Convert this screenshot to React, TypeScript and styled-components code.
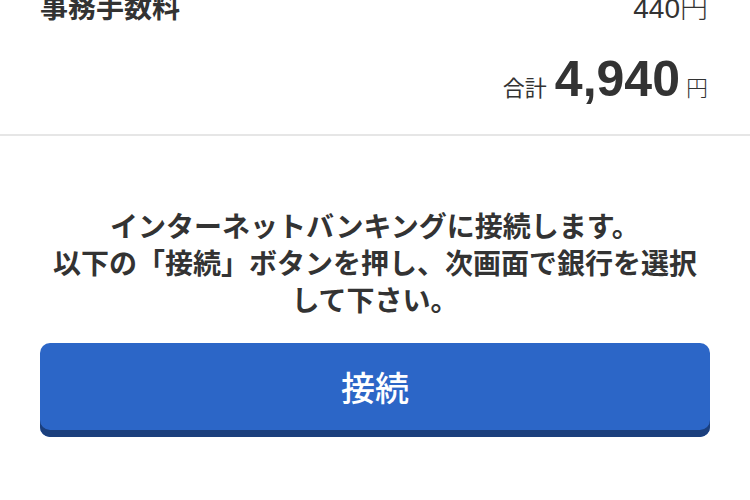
import React from "react";
import styled, { createGlobalStyle } from "styled-components";

const GlobalStyle = createGlobalStyle`
  html, body {
    margin: 0;
    padding: 0;
    background: #fff;
  }
  body {
    font-family: "Liberation Sans", "Noto Sans CJK JP", sans-serif;
    color: #333;
    overflow: hidden;
  }
`;

const Page = styled.div`
  width: 750px;
  height: 500px;
  overflow: hidden;
`;

const Summary = styled.section`
  margin-top: -7px;
  padding: 0 42px 17px 40px;
  border-bottom: 2px solid #e6e6e6;
`;

const FeeRow = styled.div`
  display: flex;
  justify-content: space-between;
  align-items: baseline;
  line-height: 32px;
`;

const FeeLabel = styled.span`
  font-size: 28px;
  font-weight: 700;
`;

const FeeValue = styled.span`
  font-size: 28px;
  font-weight: 400;
`;

const Yen = styled.span<{ $size: number }>`
  font-size: ${(p) => p.$size}px;
  font-weight: 300;
  margin-left: ${(p) => (p.$size > 24 ? 0 : 6)}px;
`;

const TotalRow = styled.div`
  display: flex;
  justify-content: flex-end;
  align-items: baseline;
  margin-top: 26px;
  line-height: 56px;
`;

const TotalLabel = styled.span`
  font-size: 22px;
  font-weight: 400;
  margin-right: 8px;
`;

const TotalAmount = styled.span`
  font-size: 50px;
  font-weight: 700;
`;

const Connect = styled.section`
  padding: 73px 40px 0;
`;

const Notice = styled.p`
  margin: 0 0 23px;
  text-align: center;
  font-size: 28px;
  font-weight: 700;
  line-height: 37px;
`;

const ConnectButton = styled.button`
  display: block;
  width: 100%;
  height: 94px;
  padding: 0 0 7px;
  border: none;
  border-radius: 10px;
  background: #2c66c7;
  box-shadow: inset 0 -7px 0 #1b3f7d;
  color: #fff;
  font-family: "Liberation Sans", "Noto Sans CJK JP", sans-serif;
  font-size: 34px;
  font-weight: 500;
  cursor: pointer;
`;

export default function App() {
  return (
    <Page>
      <GlobalStyle />
      <Summary>
        <FeeRow>
          <FeeLabel>事務手数料</FeeLabel>
          <FeeValue>
            440<Yen $size={28}>円</Yen>
          </FeeValue>
        </FeeRow>
        <TotalRow>
          <TotalLabel>合計</TotalLabel>
          <TotalAmount>4,940</TotalAmount>
          <Yen $size={22}>円</Yen>
        </TotalRow>
      </Summary>
      <Connect>
        <Notice>
          インターネットバンキングに接続します。
          <br />
          以下の「接続」ボタンを押し、次画面で銀行を選択
          <br />
          して下さい。
        </Notice>
        <ConnectButton type="button">接続</ConnectButton>
      </Connect>
    </Page>
  );
}
